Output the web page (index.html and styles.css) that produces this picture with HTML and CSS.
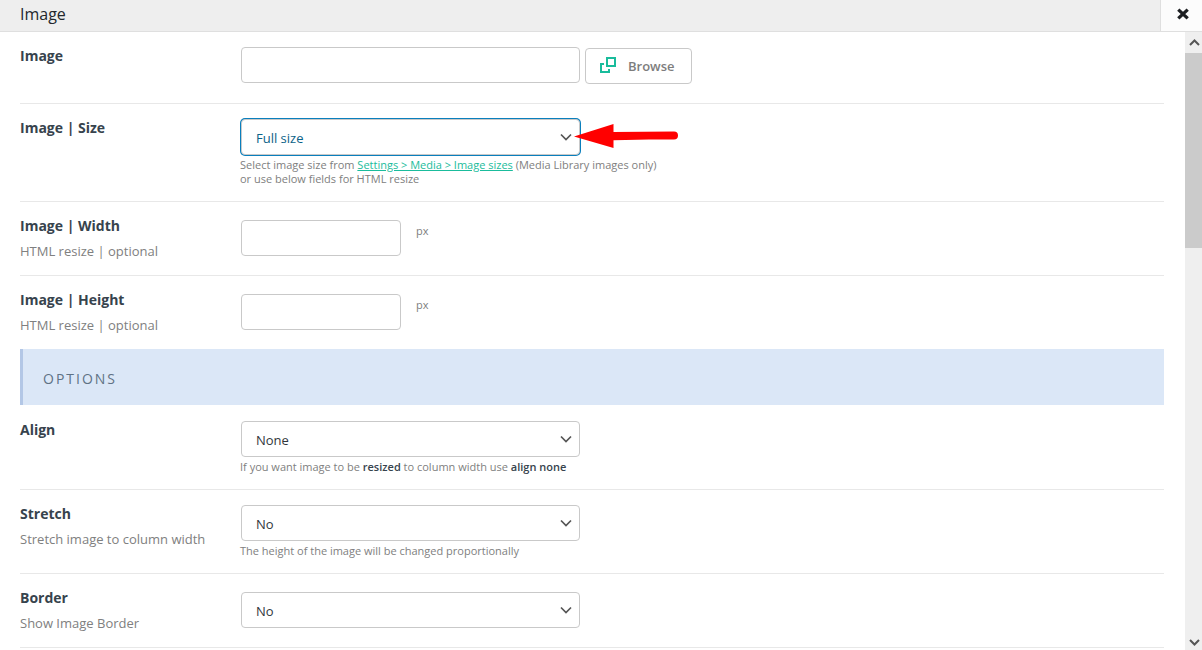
FILE: index.html
```html
<!DOCTYPE html>
<html lang="en">
<head>
<meta charset="utf-8">
<title>Image</title>
<link rel="stylesheet" href="styles.css">
</head>
<body>
<header class="modal-header">
  <h1 class="modal-title">Image</h1>
  <button class="close" type="button" aria-label="Close">
    <svg width="12" height="12" viewBox="0 0 12 12"><path d="M1.300 1.600L10.700 10.400M10.700 1.600L1.300 10.400" stroke="#1d1f22" stroke-width="3.300"/></svg>
  </button>
</header>
<div class="modal-body">
  <main class="fields">
    <div class="row row-image">
      <div class="info"><label class="label" for="image">Image</label></div>
      <div class="control">
        <div class="line">
          <input class="box wide" id="image" type="text">
          <button class="browse" type="button">
            <svg class="browse-icon" width="16" height="16" viewBox="0 0 16 16" fill="none" stroke="#1abc9c" stroke-width="2"><path d="M7 1H15V9H7ZM4 7H1V15H9V12"/></svg>
            Browse
          </button>
        </div>
      </div>
    </div>
    <div class="row">
      <div class="info"><label class="label" for="size">Image | Size</label></div>
      <div class="control">
        <div class="select-wrap">
          <select class="box wide focused" id="size"><option>Full size</option></select>
          <svg class="chevron" width="12" height="8" viewBox="0 0 12 8"><path d="M1 1.500L6 6.500L11 1.500"/></svg>
          <svg class="pointer" width="106" height="26" viewBox="0 0 106 26"><path d="M0 12.500L39.500 0V8L100 7.500A4 4 0 0 1 100 15.500L75 15.500L39.500 16.300V24Z" fill="#f00"/></svg>
        </div>
        <p class="desc">Select image size from <a class="link" href="#">Settings &gt; Media &gt; Image sizes</a> (Media Library images only)<br>or use below fields for HTML resize</p>
      </div>
    </div>
    <div class="row compact">
      <div class="info"><label class="label" for="width">Image | Width</label><p class="sub">HTML resize | optional</p></div>
      <div class="control line">
        <input class="box narrow" id="width" type="text"><span class="unit">px</span>
      </div>
    </div>
    <div class="row compact last">
      <div class="info"><label class="label" for="height">Image | Height</label><p class="sub">HTML resize | optional</p></div>
      <div class="control line">
        <input class="box narrow" id="height" type="text"><span class="unit">px</span>
      </div>
    </div>
    <h2 class="section">OPTIONS</h2>
    <div class="row">
      <div class="info"><label class="label" for="align">Align</label></div>
      <div class="control">
        <div class="select-wrap">
          <select class="box wide" id="align"><option>None</option></select>
          <svg class="chevron" width="12" height="8" viewBox="0 0 12 8"><path d="M1 1.500L6 6.500L11 1.500"/></svg>
        </div>
        <p class="desc">If you want image to be <strong class="strong">resized</strong> to column width use <strong class="strong">align none</strong></p>
      </div>
    </div>
    <div class="row">
      <div class="info"><label class="label" for="stretch">Stretch</label><p class="sub">Stretch image to column width</p></div>
      <div class="control">
        <div class="select-wrap">
          <select class="box wide" id="stretch"><option>No</option></select>
          <svg class="chevron" width="12" height="8" viewBox="0 0 12 8"><path d="M1 1.500L6 6.500L11 1.500"/></svg>
        </div>
        <p class="desc">The height of the image will be changed proportionally</p>
      </div>
    </div>
    <div class="row compact">
      <div class="info"><label class="label" for="border">Border</label><p class="sub">Show Image Border</p></div>
      <div class="control">
        <div class="select-wrap">
          <select class="box wide" id="border"><option>No</option></select>
          <svg class="chevron" width="12" height="8" viewBox="0 0 12 8"><path d="M1 1.500L6 6.500L11 1.500"/></svg>
        </div>
      </div>
    </div>
  </main>
  <div class="scrollbar" aria-hidden="true">
    <svg class="step" width="17" height="21" viewBox="0 0 17 21"><path d="M5 13L9.500 8.500L14 13"/></svg>
    <div class="thumb"></div>
    <div class="track"></div>
    <svg class="step" width="17" height="17" viewBox="0 0 17 17"><path d="M5 7L9.500 11.500L14 7"/></svg>
  </div>
</div>
</body>
</html>
```
FILE: styles.css
```css
* {
  box-sizing: border-box;
}

body {
  margin: 0;
  height: 100vh;
  display: flex;
  flex-direction: column;
  overflow: hidden;
  background: #fff;
  color: #808080;
  font-family: "Open Sans", sans-serif;
  font-size: 13px;
}

p, h1, h2 {
  margin: 0;
}

.modal-header {
  display: flex;
  flex: none;
  height: 32px;
  background: #eee;
  border-bottom: 1px solid #dfdfdf;
}

.modal-title {
  flex: 1;
  padding-left: 20px;
  font-size: 16px;
  font-weight: 400;
  line-height: 28px;
  color: #23282d;
}

.close {
  display: flex;
  align-items: center;
  justify-content: center;
  width: 42px;
  padding: 0 0 3px 3px;
  border: 0;
  border-left: 1px solid #dfdfdf;
  background: #fcfcfc;
}

.modal-body {
  display: flex;
  flex: 1;
  min-height: 0;
}

.fields {
  flex: 1;
  padding: 0 21px 0 20px;
  overflow: hidden;
}

.row {
  display: flex;
  padding: 15px 0;
  border-bottom: 1px solid #e8e8e8;
}

.row-image {
  padding-bottom: 19px;
}

.compact .control {
  padding-top: 3px;
}

.last {
  border-bottom: 0;
}

.info {
  flex: none;
  width: 220px;
}

.label {
  display: block;
  font-size: 14px;
  font-weight: 700;
  line-height: 18px;
  color: #37434d;
}

.sub {
  margin-top: 7px;
  line-height: 18px;
}

.control {
  flex: 1;
}

.line {
  display: flex;
  align-items: flex-start;
}

.box {
  display: block;
  height: 36px;
  margin: 0 0 0 1px;
  padding: 2px 15px 0;
  border: 1px solid #c9c9c9;
  border-radius: 4px;
  background: #fff;
  color: #32373c;
  font-family: inherit;
  font-size: 13px;
  appearance: none;
}

.wide {
  width: 339px;
  max-width: 100%;
}

.narrow {
  width: 160px;
}

select.box {
  padding-left: 14px;
}

.focused {
  color: #0a6288;
  box-shadow: 0 0 0 1px #0a7fbd;
}

.browse {
  display: flex;
  align-items: center;
  gap: 12px;
  height: 36px;
  margin: 1px 0 0 5px;
  padding: 0 16px 0 14px;
  border: 1px solid #c9c9c9;
  border-radius: 4px;
  background: #fff;
  color: #7d7d7d;
  font-family: inherit;
  font-size: 13px;
  font-weight: 600;
}

.browse-icon {
  margin-bottom: 2px;
}

.select-wrap {
  position: relative;
  width: 340px;
}

.chevron {
  position: absolute;
  right: 8px;
  top: 14px;
  fill: none;
  stroke: #555;
  stroke-width: 1.7;
  pointer-events: none;
}

.pointer {
  position: absolute;
  left: 334px;
  top: 5px;
  pointer-events: none;
}

.desc {
  margin-top: 3px;
  font-size: 11px;
  line-height: 14px;
}

.link {
  color: #1abc9c;
}

.strong {
  font-weight: 600;
  color: #37434d;
}

.unit {
  margin: 3px 0 0 15px;
  font-size: 11px;
  line-height: 16px;
}

.section {
  margin-bottom: 1px;
  padding: 20px 20px 16px;
  border-left: 3px solid #b3c7e6;
  background: #dbe7f7;
  color: #5f7285;
  font-size: 14px;
  font-weight: 400;
  line-height: 20px;
  letter-spacing: 2px;
}

.scrollbar {
  display: flex;
  flex-direction: column;
  flex: none;
  width: 17px;
  background: #efefef;
}

.step {
  flex: none;
  fill: none;
  stroke: #555;
  stroke-width: 2;
}

.thumb {
  flex: 195;
  background: #cbcbcb;
}

.track {
  flex: 385;
}
```
